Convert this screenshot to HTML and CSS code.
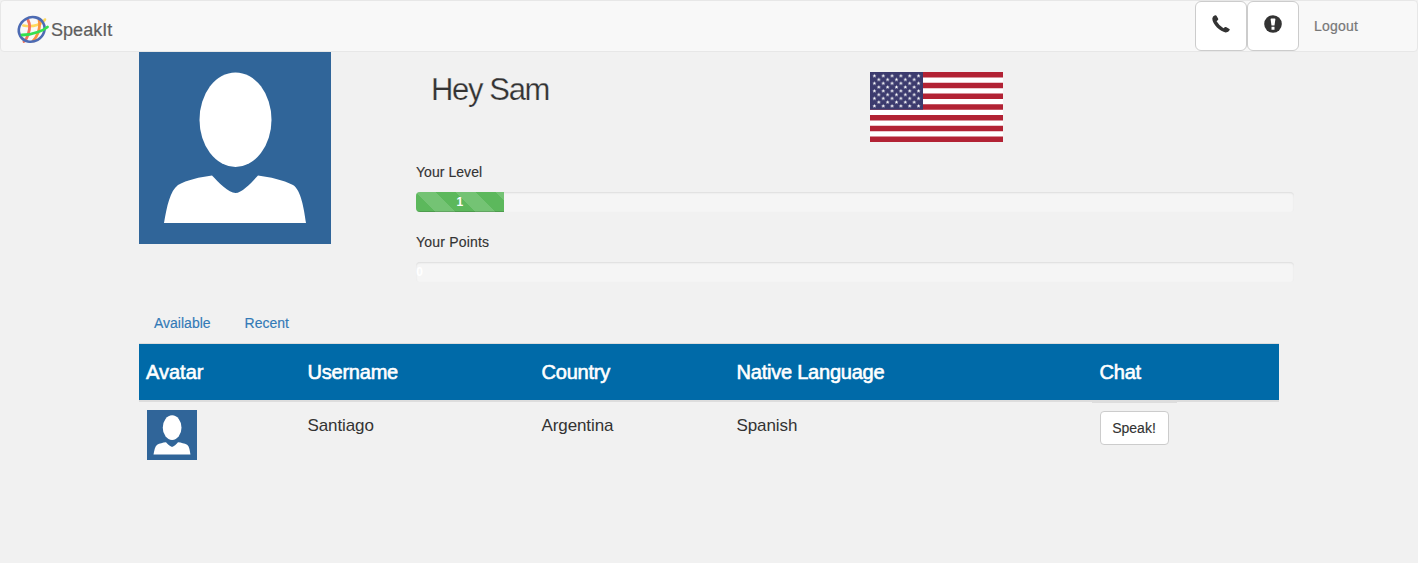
FILE: index.html
```html
<!DOCTYPE html>
<html lang="en">
<head>
<meta charset="utf-8">
<title>SpeakIt</title>
<link rel="stylesheet" href="styles.css">
</head>
<body>
<svg width="0" height="0" class="defs" aria-hidden="true">
  <symbol id="person" viewBox="0 0 192 192">
    <rect width="192" height="192" fill="#306599"/>
    <ellipse cx="96.5" cy="67.7" rx="36" ry="47.2" fill="#fff"/>
    <path d="M25 171C28 154 31 139 39 133C48 128 61 125 73 123.500C79 130 90 141 96.500 141C103 141 113 130 119 123.500C131 125 144 128 154 133C162 138 165 157 167 171Z" fill="#fff"/>
  </symbol>
</svg>
<nav class="navbar">
  <a class="brand">
    <svg width="34" height="32" viewBox="0 0 34 32" fill="none" stroke-linecap="round">
      <path d="M7.300 12.500Q15 14 21 12Q27 10 29 6.500" stroke="#ffd95c" stroke-width="2.600"/>
      <path d="M12 7Q15 13 12.500 20Q11 26 8 28.500" stroke="#f4735c" stroke-width="2.800"/>
      <path d="M23 6.500Q24.500 13 22 20Q20 25 17 28" stroke="#fa9340" stroke-width="2.800"/>
      <ellipse cx="15.700" cy="16.400" rx="13.200" ry="12" stroke="#4d6bb3" stroke-width="2.600" transform="rotate(-30 15.700 16.400)"/>
      <path d="M6 22Q14 22 22 19Q28 17 31.500 14" stroke="#35e050" stroke-width="2.800"/>
    </svg>
    <span>SpeakIt</span>
  </a>
  <div class="nav-right">
    <button class="nav-btn" aria-label="Call">
      <svg width="18" height="18" viewBox="0 0 18 18"><path d="M3 .3Q4 0 4.500.8L6.200 3.700Q6.500 4.500 5.900 5L4.600 6.200Q6.800 10.200 11.500 13.200L12.700 12.200Q13.300 11.800 14 12.100L17.400 13.900Q18 14.300 17.700 15.100Q16.500 17.500 13.600 17.400C8.500 17 .2 9.500.3 3.600Q.5 1.200 3 .3Z" fill="#333"/></svg>
    </button>
    <button class="nav-btn" aria-label="Alerts">
      <svg width="18" height="18" viewBox="0 0 18 18"><circle cx="9" cy="9" r="8.800" fill="#333"/><path d="M7.300 3.500H10.700Q11.500 3.500 11.400 4.300L10.500 10.500H7.500L6.600 4.300Q6.500 3.500 7.300 3.500ZM7.500 11.800H10.500V14.800H7.500Z" fill="#fff"/></svg>
    </button>
    <a class="logout">Logout</a>
  </div>
</nav>
<main class="container">
  <section class="profile">
    <svg class="portrait"><use href="#person"/></svg>
    <div class="details">
      <div class="greeting">
        <h2>Hey Sam</h2>
        <svg class="flag" width="133" height="70" viewBox="0 0 133 70">
          <defs>
            <pattern id="starsA" width="8.833" height="7.540" patternUnits="userSpaceOnUse">
              <path d="M4.420 2L5 3.200L6.300 3.300L5.300 4.200L5.600 5.400L4.420 4.800L3.200 5.400L3.500 4.200L2.500 3.300L3.800 3.200Z" fill="#fff"/>
            </pattern>
            <pattern id="starsB" x="4.420" y="3.770" width="8.833" height="7.540" patternUnits="userSpaceOnUse">
              <path d="M4.420 2L5 3.200L6.300 3.300L5.300 4.200L5.600 5.400L4.420 4.800L3.200 5.400L3.500 4.200L2.500 3.300L3.800 3.200Z" fill="#fff"/>
            </pattern>
          </defs>
          <rect width="133" height="70" fill="#fff"/>
          <path d="M0 2.690H133M0 13.460H133M0 24.230H133M0 35H133M0 45.770H133M0 56.540H133M0 67.310H133" stroke="#b22234" stroke-width="5.385"/>
          <rect width="53" height="37.700" fill="#3c3b6e"/>
          <rect width="53" height="37.700" fill="url(#starsA)"/>
          <rect x="4.420" y="3.770" width="44.170" height="30.160" fill="url(#starsB)"/>
        </svg>
      </div>
      <p class="label">Your Level</p>
      <div class="progress"><div class="bar striped">1</div></div>
      <p class="label points">Your Points</p>
      <div class="progress"><div class="bar empty">0</div></div>
    </div>
  </section>
  <div class="tabs"><a>Available</a><a>Recent</a></div>
  <section class="table">
    <div class="row head">
      <span class="first">Avatar</span><span>Username</span><span>Country</span><span>Native Language</span><span>Chat</span>
    </div>
    <div class="row">
      <span class="pic"><svg class="thumb"><use href="#person"/></svg></span>
      <span>Santiago</span><span>Argentina</span><span>Spanish</span>
      <span class="action"><button class="speak">Speak!</button></span>
    </div>
  </section>
</main>
</body>
</html>
```

FILE: styles.css
```css
* { box-sizing: border-box; }
body { margin: 0; background: #f1f1f1; color: #333; font: 14px/20px "Liberation Sans", Arial, sans-serif; }
.defs { display: none; }
.navbar { display: flex; justify-content: space-between; height: 52px; padding: 0 44px 0 15px; background: #f8f8f8; border: 1px solid #e7e7e7; border-radius: 4px; }
.brand { display: flex; align-items: center; gap: 1px; padding-top: 5px; font-size: 18px; color: #5e5e5e; }
.brand svg { display: block; }
.brand span { padding-top: 2px; letter-spacing: 0.050px; -webkit-text-stroke: 0.2px #5e5e5e; }
.nav-right { display: flex; align-items: flex-start; }
.nav-btn { display: flex; justify-content: center; width: 52px; height: 50px; padding: 13px 0 0; background: #fff; border: 1px solid #ccc; border-radius: 6px; }
.logout { width: 74px; padding: 15px 0 15px 15px; color: #777; letter-spacing: 0.2px; -webkit-text-stroke: 0.2px #777; }
.container { width: 1170px; margin: 0 auto; padding: 0 15px; }
.profile { display: flex; justify-content: space-between; width: 1155px; height: 261px; }
.portrait { width: 192px; height: 192px; }
.details { width: 878px; }
.greeting { display: flex; height: 110px; padding: 20px 0 0 15px; }
h2 { width: 439px; margin: 0; font-size: 31px; line-height: 35px; font-weight: 400; letter-spacing: -1.350px; -webkit-text-stroke: 0.25px #f1f1f1; }
.flag { display: block; }
.label { margin: 0 0 10px; letter-spacing: 0.050px; -webkit-text-stroke: 0.15px #333; }
.points { letter-spacing: 0.2px; }
.progress { height: 20px; margin-bottom: 20px; overflow: hidden; background: #f5f5f5; border-radius: 4px; box-shadow: inset 0 1px 2px rgba(0,0,0,.1); }
.bar { height: 20px; font-size: 12px; font-weight: 700; color: #fff; text-align: center; }
.striped { width: 10%; background: #5cb85c linear-gradient(45deg, rgba(255,255,255,.15) 25%, transparent 25%, transparent 50%, rgba(255,255,255,.15) 50%, rgba(255,255,255,.15) 75%, transparent 75%) 0 0/40px 40px; box-shadow: inset 0 -1px 0 rgba(0,0,0,.15); }
.empty { width: 7px; }
.tabs { display: flex; gap: 4px; height: 30px; }
.tabs a { padding: 0 15px; color: #337ab7; -webkit-text-stroke: 0.15px #337ab7; }
.table { border-top: 1px solid #ddd; }
.row { display: grid; grid-template-columns: 160.500px 234px 195px 363px 1fr; font-size: 17px; line-height: 24px; letter-spacing: -0.1px; }
.row > span { padding: 12px 8px 0; }
.head { height: 58px; background: #006aa8; border-bottom: 2px solid #ddd; color: #fff; font-size: 20px; letter-spacing: -0.22px; -webkit-text-stroke: 0.6px #fff; }
.head > span { padding: 16px 7px 0 8px; }
.head > .first { padding-left: 7px; letter-spacing: 0; }
.row > .pic { padding-top: 8px; }
.thumb { display: block; width: 50px; height: 50px; }
.row > .action { justify-self: start; width: 85px; padding-top: 8px; border-top: 1px solid #ddd; }
.speak { display: block; width: 69px; height: 34px; padding: 0; background: #fff; border: 1px solid #ccc; border-radius: 4px; color: #333; font: inherit; font-size: 14px; letter-spacing: 0; -webkit-text-stroke: 0.15px #333; }
```
